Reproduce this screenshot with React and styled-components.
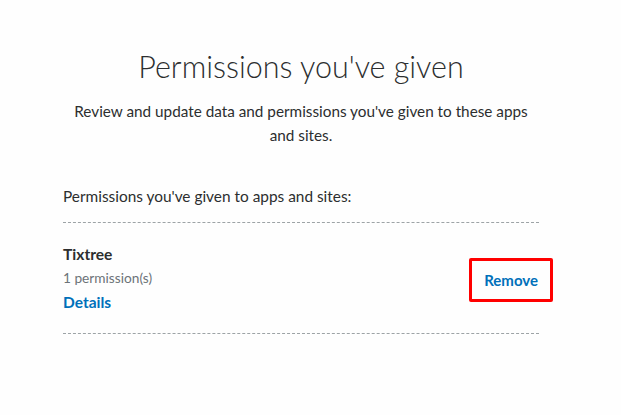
import React from 'react';
import styled, { createGlobalStyle } from 'styled-components';

const GlobalStyle = createGlobalStyle`
  body {
    margin: 0;
    background: #fefefe;
    font-family: Lato, "Noto Sans", sans-serif;
    color: #2c2e2f;
  }
`;

const Page = styled.main`
  width: 476px;
  margin-left: 63px;
  padding-top: 46px;
`;

const Title = styled.h1`
  margin: 0;
  text-align: center;
  font-size: 30.5px;
  font-weight: 300;
  line-height: 40px;
`;

const Intro = styled.p`
  margin: 13px -20px 0;
  text-align: center;
  font-size: 15.3px;
  line-height: 24px;
`;

const SectionLabel = styled.p`
  margin: 37px 0 0;
  font-size: 15.4px;
  line-height: 24px;
  padding-bottom: 14px;
  border-bottom: 1px dashed #9da3a6;
`;

const Row = styled.div`
  display: flex;
  align-items: center;
  justify-content: space-between;
  padding: 20px 0 19px;
  border-bottom: 1px dashed #9da3a6;
`;

const Info = styled.div`
  display: flex;
  flex-direction: column;
`;

const AppName = styled.span`
  font-size: 15.6px;
  font-weight: 700;
  line-height: 23px;
`;

const Count = styled.span`
  font-size: 13.7px;
  color: #6c7378;
  line-height: 24px;
`;

const Link = styled.a`
  font-size: 15.5px;
  font-weight: 700;
  color: #0070ba;
  line-height: 24px;
  text-decoration: none;
`;

const RemoveButton = styled.button`
  margin: 3px -14px 0 0;
  padding: 9px 12px;
  border: 3px solid #ff0000;
  border-radius: 2px;
  background: transparent;
  font-family: inherit;
  font-size: 15px;
  font-weight: 700;
  color: #0070ba;
  line-height: 20px;
`;

export default function App() {
  return (
    <>
      <GlobalStyle />
      <Page>
        <Title>Permissions you've given</Title>
        <Intro>
          Review and update data and permissions you've given to these apps
          <br />
          and sites.
        </Intro>
        <SectionLabel>Permissions you've given to apps and sites:</SectionLabel>
        <Row>
          <Info>
            <AppName>Tixtree</AppName>
            <Count>1 permission(s)</Count>
            <Link href="#">Details</Link>
          </Info>
          <RemoveButton>Remove</RemoveButton>
        </Row>
      </Page>
    </>
  );
}
